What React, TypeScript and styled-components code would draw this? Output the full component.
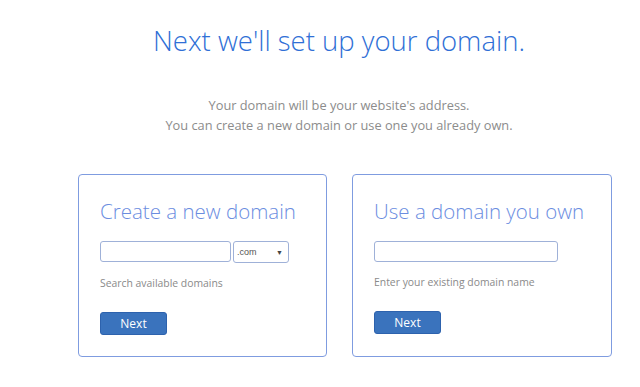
import React from 'react';
import styled, { createGlobalStyle } from 'styled-components';

const GlobalStyle = createGlobalStyle`
  html, body {
    margin: 0;
    padding: 0;
    background: #ffffff;
  }
  body {
    font-family: 'Open Sans', 'Liberation Sans', sans-serif;
  }
`;

const Page = styled.div`
  width: 640px;
  height: 387px;
  overflow: hidden;
  display: flex;
  flex-direction: column;
  align-items: center;
  padding-left: 38px;
  box-sizing: border-box;
`;

const Title = styled.h1`
  margin: 23px 0 0;
  font-size: 27.5px;
  font-weight: 300;
  color: #2f6fd6;
  line-height: 36px;
  letter-spacing: 0;
`;

const Intro = styled.p`
  margin: 36px 0 0;
  font-size: 12.8px;
  font-weight: 400;
  line-height: 20px;
  color: #8c8c8c;
  text-align: center;
`;

const Cards = styled.div`
  display: flex;
  gap: 25px;
  margin: 39px 0 0 12px;
`;

const Card = styled.section<{ $width: number }>`
  width: ${(p) => p.$width}px;
  height: 183px;
  box-sizing: border-box;
  border: 1px solid #7f9ce0;
  border-radius: 4px;
  padding: 22px 21px 0;
`;

const CardTitle = styled.h2`
  margin: 0;
  font-size: 20.5px;
  font-weight: 300;
  line-height: 28px;
  color: #6b8ddf;
`;

const InputRow = styled.div`
  display: flex;
  gap: 2px;
  margin-top: 16px;
`;

const TextInput = styled.input<{ $width: number }>`
  width: ${(p) => p.$width}px;
  height: 21px;
  box-sizing: border-box;
  border: 1px solid #9fb1d8;
  border-radius: 3px;
  padding: 0 4px;
  font-family: inherit;
  font-size: 11px;
  outline: none;
`;

const Select = styled.div`
  width: 56px;
  height: 22px;
  box-sizing: border-box;
  border: 1px solid #9fb1d8;
  border-radius: 3px;
  display: flex;
  align-items: center;
  justify-content: space-between;
  padding: 0 5px 0 3px;
  font-family: 'Liberation Sans', Arial, sans-serif;
  font-size: 9px;
  color: #555;
`;

const Caret = styled.span`
  font-size: 7px;
  color: #444;
`;

const Help = styled.p`
  margin: 12px 0 0;
  font-size: 10.4px;
  line-height: 16px;
  color: #8a8a8a;
`;

const NextButton = styled.button`
  display: block;
  margin-top: 21px;
  width: 67px;
  height: 23px;
  border: 1px solid #2d62ad;
  border-radius: 3px;
  background: #3a73bd;
  color: #ffffff;
  font-family: inherit;
  font-size: 12px;
  padding: 0;
`;

export default function App() {
  return (
    <>
      <GlobalStyle />
      <Page>
        <Title>Next we'll set up your domain.</Title>
        <Intro>
          Your domain will be your website's address.
          <br />
          You can create a new domain or use one you already own.
        </Intro>
        <Cards>
          <Card $width={249}>
            <CardTitle>Create a new domain</CardTitle>
            <InputRow>
              <TextInput $width={131} />
              <Select>
                <span>.com</span>
                <Caret>▼</Caret>
              </Select>
            </InputRow>
            <Help>Search available domains</Help>
            <NextButton>Next</NextButton>
          </Card>
          <Card $width={260}>
            <CardTitle>Use a domain you own</CardTitle>
            <InputRow>
              <TextInput $width={184} />
            </InputRow>
            <Help>Enter your existing domain name</Help>
            <NextButton>Next</NextButton>
          </Card>
        </Cards>
      </Page>
    </>
  );
}
